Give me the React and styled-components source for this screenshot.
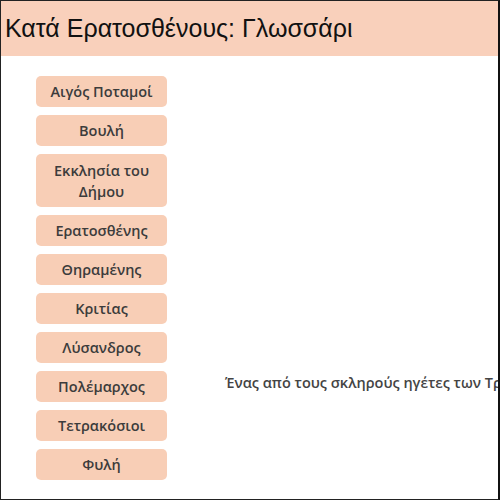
import React from "react";
import styled, { createGlobalStyle } from "styled-components";

const terms = [
  "Αιγός Ποταμοί",
  "Βουλή",
  "Εκκλησία του Δήμου",
  "Ερατοσθένης",
  "Θηραμένης",
  "Κριτίας",
  "Λύσανδρος",
  "Πολέμαρχος",
  "Τετρακόσιοι",
  "Φυλή",
];

const active = "Πολέμαρχος";
const definition =
  "Ένας από τους σκληρούς ηγέτες των Τριάκοντα, αδελφός του Λυσία";

export default function App() {
  return (
    <>
      <GlobalStyle />
      <Frame>
        <Header>
          <Title>Κατά Ερατοσθένους: Γλωσσάρι</Title>
        </Header>
        <Glossary>
          {terms.map((t) => (
            <Row key={t}>
              <TermButton $wrap={t.length > 14}>{t}</TermButton>
              {t === active && <Definition>{definition}</Definition>}
            </Row>
          ))}
        </Glossary>
      </Frame>
    </>
  );
}

const GlobalStyle = createGlobalStyle`
  * { box-sizing: border-box; }
  body {
    margin: 0;
    background: #fff;
  }
`;

const Frame = styled.div`
  width: 500px;
  height: 500px;
  overflow: hidden;
  border-top: 1px solid #222;
  border-left: 1px solid #222;
  border-bottom: 1px solid #222;
  border-right: 2px solid #111;
  display: flex;
  flex-direction: column;
`;

const Header = styled.header`
  background: #f9d0bb;
  height: 55px;
  flex-shrink: 0;
  display: flex;
  align-items: center;
  padding-left: 4px;
`;

const Title = styled.h1`
  margin: 0;
  font-family: "Liberation Sans", Arial, sans-serif;
  font-weight: normal;
  font-size: 25px;
  color: #111;
`;

const Glossary = styled.ul`
  list-style: none;
  margin: 0;
  padding: 20px 0 0 35px;
  display: flex;
  flex-direction: column;
  gap: 8px;
`;

const Row = styled.li`
  display: flex;
  align-items: center;
  white-space: nowrap;
`;

const TermButton = styled.button`
  width: 131px;
  height: ${(p) => (p.$wrap ? "53px" : "31px")};
  padding: ${(p) => (p.$wrap ? "0 12px" : "0 8px")};
  border: none;
  border-radius: 5px;
  background: #f8ceb6;
  color: #3c3c3c;
  font-family: "Open Sans", "Noto Sans", sans-serif;
  font-weight: 600;
  font-size: 14.5px;
  line-height: 21px;
  white-space: normal;
  text-align: center;
  flex-shrink: 0;
`;

const Definition = styled.p`
  margin: 0 0 8px 58px;
  font-family: "Open Sans", "Noto Sans", sans-serif;
  font-weight: 600;
  font-size: 14.5px;
  color: #444;
`;
